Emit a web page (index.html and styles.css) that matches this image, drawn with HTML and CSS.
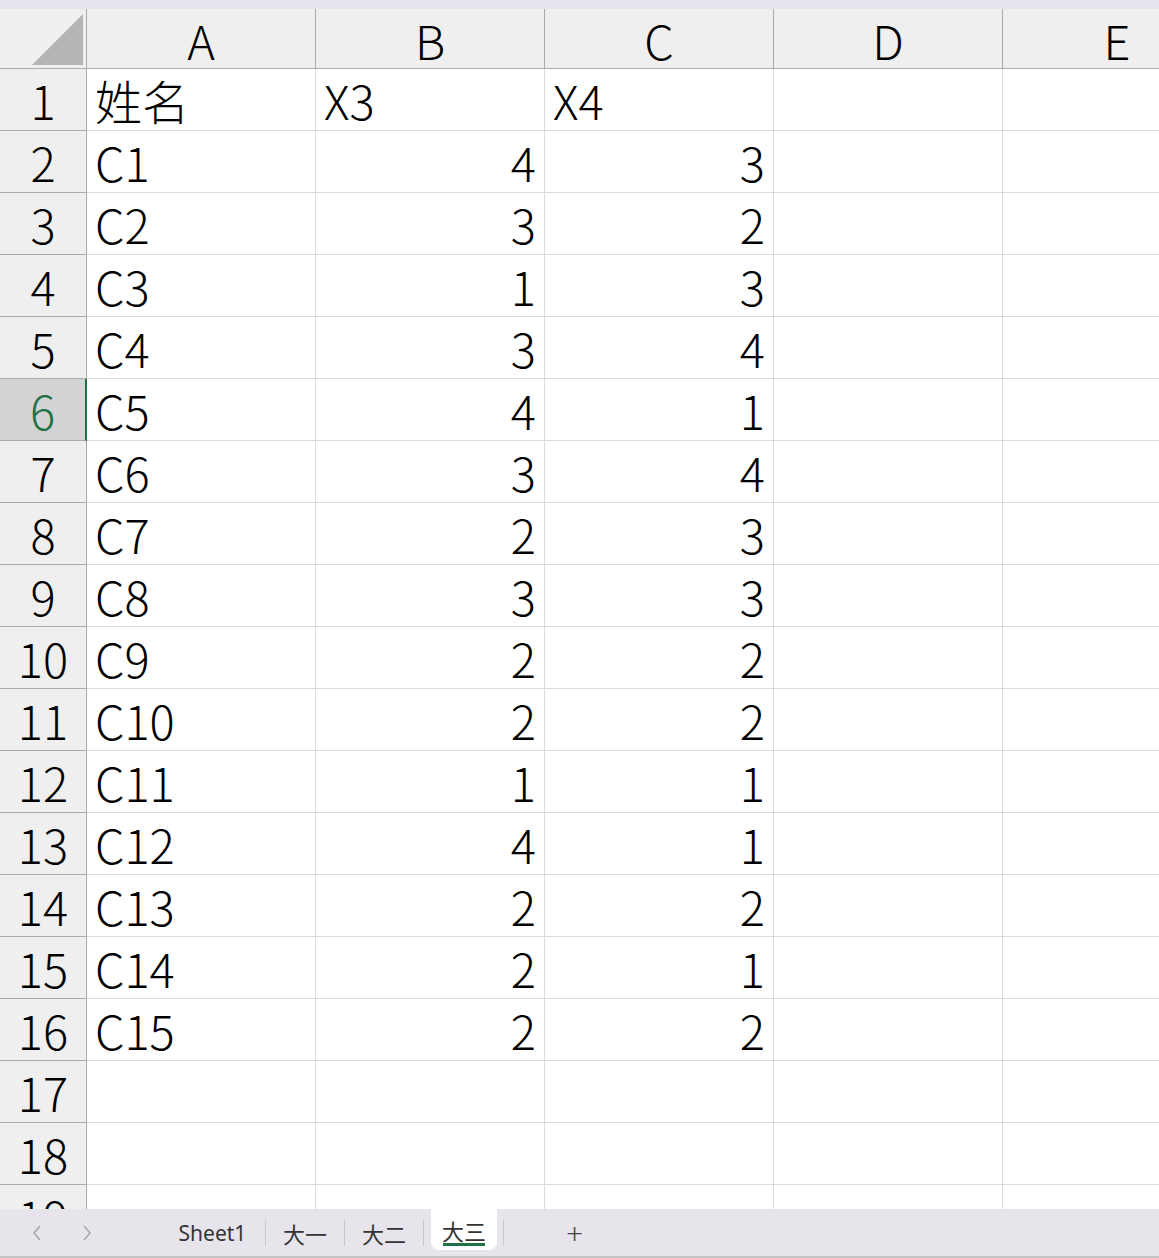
FILE: index.html
```html
<!DOCTYPE html>
<html lang="zh">
<head>
  <meta charset="UTF-8" />
  <meta name="viewport" content="width=device-width, initial-scale=1.0">
  <title>大三</title>
  <link rel="stylesheet" href="styles.css">
</head>
<body>

  <div class="topstrip"></div>

  <div class="sheet">
    <div class="grid" id="grid">
      <div class="cell corner">
        <svg width="86" height="59" viewBox="0 0 86 59"><polygon points="32,56 83,56 83,5" fill="#b5b5b5"/></svg>
      </div>
      <div class="cell colhead">A</div>
      <div class="cell colhead">B</div>
      <div class="cell colhead">C</div>
      <div class="cell colhead">D</div>
      <div class="cell colhead">E</div>
    </div>
  </div>

  <div class="tabbar">
    <div class="nav">
      <svg width="12" height="16" viewBox="0 0 12 16"><polyline points="9,1 3,8 9,15" fill="none" stroke="#a3a3a3" stroke-width="1.4"/></svg>
      <svg width="12" height="16" viewBox="0 0 12 16"><polyline points="3,1 9,8 3,15" fill="none" stroke="#a3a3a3" stroke-width="1.4"/></svg>
    </div>
    <div class="tab first">Sheet1</div>
    <div class="tab">大一</div>
    <div class="tab">大二</div>
    <div class="tab active"><span>大三</span></div>
    <div class="tab last"></div>
    <div class="add">+</div>
  </div>

  <script>
    const data = [
      ["姓名", "X3", "X4"],
      ["C1", 4, 3],
      ["C2", 3, 2],
      ["C3", 1, 3],
      ["C4", 3, 4],
      ["C5", 4, 1],
      ["C6", 3, 4],
      ["C7", 2, 3],
      ["C8", 3, 3],
      ["C9", 2, 2],
      ["C10", 2, 2],
      ["C11", 1, 1],
      ["C12", 4, 1],
      ["C13", 2, 2],
      ["C14", 2, 1],
      ["C15", 2, 2]
    ];

    const grid = document.getElementById("grid");
    let html = "";

    for (let r = 1; r <= 19; r++) {
      const row = data[r - 1] || [];
      const sel = r === 6 ? " selected" : "";
      html += `<div class="cell rowhead${sel}"><span>${r}</span></div>`;
      for (let c = 0; c < 5; c++) {
        const v = row[c];
        const num = typeof v === "number" ? " num" : "";
        html += `<div class="cell${num}"><span>${v === undefined ? "" : v}</span></div>`;
      }
    }

    grid.innerHTML += html;
  </script>
</body>
</html>
```

FILE: styles.css
```css
:root {
  --head-bg: #efefef;
  --head-line: #ababab;
  --grid-line: #dadada;
  --bar-bg: #e8e4ec;
  --green: #1e7145;
}

* {
  box-sizing: border-box;
}

body {
  margin: 0;
  padding: 0;
  width: 1159px;
  height: 1258px;
  overflow: hidden;
  background: #fff;
  font-family: 'Noto Sans CJK SC', 'Noto Sans', sans-serif;
  color: #000;
}

.topstrip {
  height: 9px;
  background: #e6e3ec;
}

.sheet {
  height: 1200px;
  overflow: hidden;
}

.grid {
  display: grid;
  grid-template-columns: 87px 229px 229px 229px 229px 229px;
  grid-template-rows: 60px;
  grid-auto-rows: 62px;
}

.cell {
  display: flex;
  align-items: center;
  border-right: 1px solid var(--grid-line);
  border-bottom: 1px solid var(--grid-line);
  font-size: 47px;
  font-weight: 300;
  line-height: 1;
  padding: 0 8px;
  white-space: nowrap;
  overflow: hidden;
}

.cell.num {
  justify-content: flex-end;
}

.corner {
  background: var(--head-bg);
  border-right-color: var(--head-line);
  border-bottom-color: var(--head-line);
  padding: 0;
}

.corner svg {
  display: block;
}

.colhead {
  background: var(--head-bg);
  border-right-color: var(--head-line);
  border-bottom-color: var(--head-line);
  justify-content: center;
  padding-top: 1px;
}

.rowhead {
  background: var(--head-bg);
  border-right-color: var(--head-line);
  border-bottom-color: var(--head-line);
  justify-content: center;
  padding-left: 0;
  padding-right: 0;
}

.rowhead.selected {
  background: #d3d3d3;
  color: var(--green);
  border-right: 2px solid var(--green);
}

.tabbar {
  height: 49px;
  background: var(--bar-bg);
  border-bottom: 2px solid #c4c4c4;
  display: flex;
  align-items: stretch;
  font-family: 'Noto Sans', 'Noto Sans CJK SC', sans-serif;
  font-size: 22px;
  color: #333;
}

.nav {
  width: 160px;
  display: flex;
  align-items: center;
  gap: 38px;
  padding-left: 31px;
}

.nav svg {
  display: block;
}

.tab {
  position: relative;
  display: flex;
  align-items: center;
  justify-content: center;
  width: 79px;
  border-right: 1px solid #c9c9c9;
  margin: 11px 0 10px;
}

.tab.first {
  width: 106px;
  font-size: 21px;
}

.tab.active {
  margin: 0;
  padding: 0 6px 6px 7px;
  width: 79px;
  border-right: none;
}

.tab.active span {
  flex: 1;
  height: 100%;
  background: #fff;
  border-radius: 0 0 8px 8px;
  display: flex;
  align-items: center;
  justify-content: center;
  position: relative;
}

.tab.active span::after {
  content: "";
  position: absolute;
  left: 12px;
  right: 12px;
  bottom: 4px;
  height: 3px;
  background: var(--green);
}

.tab.active::before,
.tab.active::after {
  content: "";
  position: absolute;
  top: 0;
  width: 8px;
  height: 8px;
}

.tab.active::before {
  left: 7px;
  background: radial-gradient(circle 8px at 0 100%, transparent 7.5px, #fff 8px);
}

.tab.active::after {
  right: 6px;
  background: radial-gradient(circle 8px at 100% 100%, transparent 7.5px, #fff 8px);
}

.tab.last {
  width: 0;
  border-left: 1px solid #c9c9c9;
  border-right: none;
}

.add {
  margin-left: 62px;
  display: flex;
  align-items: center;
  font-size: 30px;
  font-weight: 300;
  color: #444;
}
```
